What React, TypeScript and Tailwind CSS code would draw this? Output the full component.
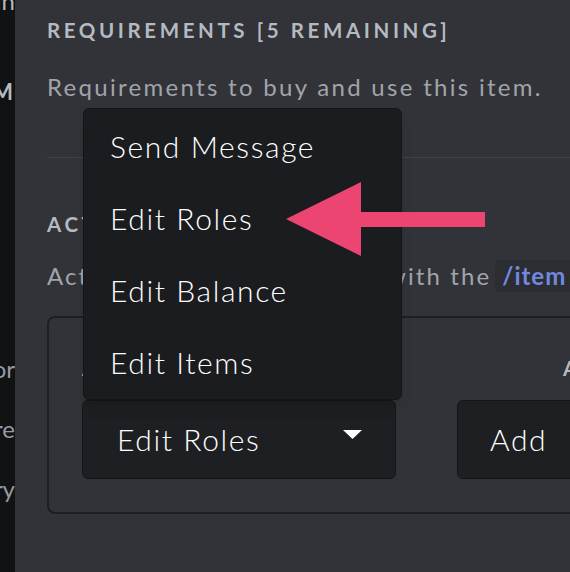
const font = { fontFamily: 'Lato, "Noto Sans", sans-serif' }

const menuItems = ['Send Message', 'Edit Roles', 'Edit Balance', 'Edit Items']

function Sidebar() {
  return (
    <aside className="flex w-[15px] shrink-0 flex-col items-end overflow-hidden bg-[#111214] text-[#b5bac1]">
      <div className="-mt-[14px] flex h-[30px] w-full items-center justify-end whitespace-nowrap text-[24px]">Main</div>
      <div className="mt-[60px] flex h-[30px] w-full items-center justify-end whitespace-nowrap text-[22px] font-bold tracking-[2px]">CUSTOM</div>
      <div className="mt-[248px] flex h-[30px] w-full items-center justify-end whitespace-nowrap text-[24px] text-[#949ba4]">Monitor</div>
      <div className="mt-[30px] flex h-[30px] w-full items-center justify-end whitespace-nowrap text-[24px] text-[#949ba4]">Store</div>
      <div className="mt-[30px] flex h-[30px] w-full items-center justify-end whitespace-nowrap text-[24px] text-[#949ba4]">Inventory</div>
    </aside>
  )
}

function ActionMenu() {
  return (
    <div className="absolute bottom-full left-px w-[319px] rounded-md border border-[#141517] bg-[#1b1c1f] py-[1px] shadow-lg">
      {menuItems.map((item) => (
        <div key={item} className="flex h-[72px] items-center px-[26px] text-[30px] font-light tracking-[1.6px] text-white">
          {item}
        </div>
      ))}
    </div>
  )
}

export default function App() {
  return (
    <div className="flex h-[572px] w-[570px] overflow-hidden bg-[#313338]" style={font}>
      <Sidebar />
      <main className="relative flex-1 whitespace-nowrap pl-8 pt-[16px]">
        <h2 className="text-[20.5px] font-bold uppercase leading-[28px] tracking-[3.6px] text-[#b5bac1]">
          Requirements [5 remaining]
        </h2>
        <p className="mt-[27px] text-[24px] leading-[32px] tracking-[2.3px] text-[#a1a4aa]">
          Requirements to buy and use this item.
        </p>
        <div className="mt-[54px] h-px w-[600px] bg-[#404248]" />

        <h2 className="mt-[52px] text-[20.5px] font-bold uppercase leading-[28px] tracking-[3.6px] text-[#b5bac1]">
          Actions
        </h2>
        <p className="mt-[22px] flex items-center text-[24px] leading-[32px] tracking-[2.1px] text-[#a1a4aa]">
          Actions are run when used with the
          <code className="ml-[4px] rounded-md bg-[#2b2d31] px-[7px] font-bold tracking-[1px] text-[#7288e0]" style={font}>
            /item use
          </code>
        </p>

        <div className="mt-[24px] w-[620px] rounded-lg border-2 border-[#1e1f22] px-[33px] pb-[33px] pt-[36px]">
          <div className="flex gap-[61px]">
            <div className="flex w-[314px] shrink-0 flex-col">
              <span className="text-[20.5px] font-bold uppercase leading-[28px] tracking-[3.6px] text-[#b5bac1]">
                Action
              </span>
              <div className="relative mt-[18px]">
                <ActionMenu />
                <button className="flex h-[79px] w-full items-center justify-between rounded-md border border-[#141517] bg-[#1e1f22] pl-[34px] pr-[33px] text-[30px] font-light tracking-[1.6px] text-white">
                  Edit Roles
                  <svg width="19" height="10" viewBox="0 0 19 10" className="mb-[10px]">
                    <polygon points="0,0 19,0 9.5,9" fill="#ffffff" />
                  </svg>
                </button>
              </div>
            </div>
            <div className="flex shrink-0 flex-col">
              <span className="ml-[106px] text-[20.5px] font-bold uppercase leading-[28px] tracking-[3.6px] text-[#b5bac1]">
                Amount
              </span>
              <button className="mt-[18px] flex h-[79px] w-[200px] items-center rounded-md border border-[#141517] bg-[#1e1f22] pl-[32px] text-[30px] font-light tracking-[1.6px] text-white">
                Add
              </button>
            </div>
          </div>
        </div>

        <svg
          className="absolute left-[271px] top-[182px]"
          width="200"
          height="74"
          viewBox="0 0 200 74"
        >
          <polygon points="0,37 75,0 75,30 199,30 199,45 75,45 75,74" fill="#ec4571" />
        </svg>
      </main>
    </div>
  )
}
